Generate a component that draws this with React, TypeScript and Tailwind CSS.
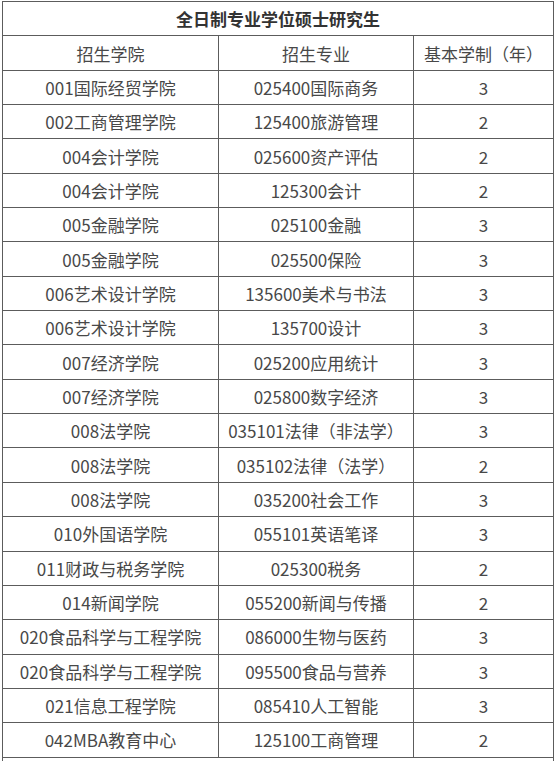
const rows: [string, string, string][] = [
  ['001国际经贸学院', '025400国际商务', '3'],
  ['002工商管理学院', '125400旅游管理', '2'],
  ['004会计学院', '025600资产评估', '2'],
  ['004会计学院', '125300会计', '2'],
  ['005金融学院', '025100金融', '3'],
  ['005金融学院', '025500保险', '3'],
  ['006艺术设计学院', '135600美术与书法', '3'],
  ['006艺术设计学院', '135700设计', '3'],
  ['007经济学院', '025200应用统计', '3'],
  ['007经济学院', '025800数字经济', '3'],
  ['008法学院', '035101法律（非法学）', '3'],
  ['008法学院', '035102法律（法学）', '2'],
  ['008法学院', '035200社会工作', '3'],
  ['010外国语学院', '055101英语笔译', '3'],
  ['011财政与税务学院', '025300税务', '2'],
  ['014新闻学院', '055200新闻与传播', '2'],
  ['020食品科学与工程学院', '086000生物与医药', '3'],
  ['020食品科学与工程学院', '095500食品与营养', '3'],
  ['021信息工程学院', '085410人工智能', '3'],
  ['042MBA教育中心', '125100工商管理', '2'],
];

export default function App() {
  const cell = 'border border-[#5c5c5c] text-center align-middle p-0 h-[34.35px]';
  return (
    <div className="w-[554px] h-[761px] overflow-hidden bg-white pt-px pl-[2px]">
      <table
        className="w-[551px] border-collapse table-fixed text-[17px] leading-none text-[#484848]"
        style={{ fontFamily: '"Noto Sans CJK SC", "Noto Sans", sans-serif' }}
      >
        <colgroup>
          <col className="w-[216px]" />
          <col className="w-[195px]" />
          <col className="w-[140px]" />
        </colgroup>
        <tbody>
          <tr>
            <td colSpan={3} className={`${cell} font-bold text-[#333333]`}>
              全日制专业学位硕士研究生
            </td>
          </tr>
          <tr>
            <td className={cell}>招生学院</td>
            <td className={cell}>招生专业</td>
            <td className={cell}>基本学制（年）</td>
          </tr>
          {rows.map((r, i) => (
            <tr key={i}>
              <td className={cell}>{r[0]}</td>
              <td className={cell}>{r[1]}</td>
              <td className={cell}>{r[2]}</td>
            </tr>
          ))}
          <tr>
            <td colSpan={3} className={cell}>&nbsp;</td>
          </tr>
        </tbody>
      </table>
    </div>
  );
}
